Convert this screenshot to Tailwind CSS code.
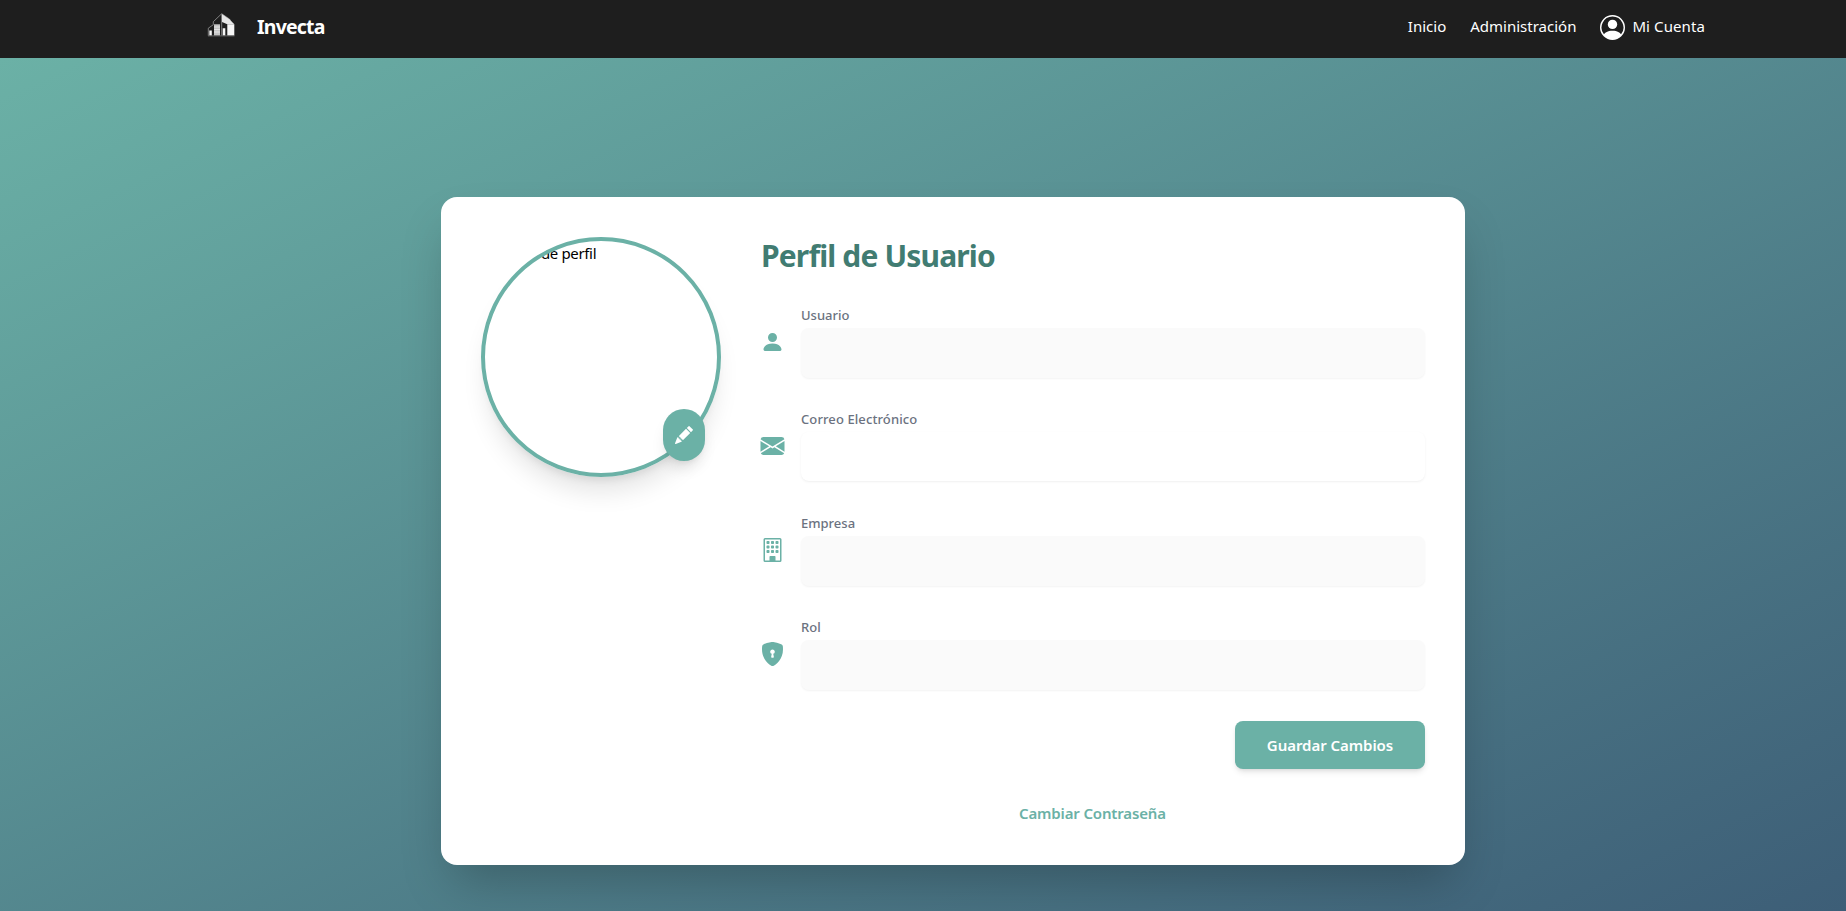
<!DOCTYPE html>
<html lang="es">
<head>
<meta charset="utf-8">
<title>Invecta</title>
<script src="https://cdn.jsdelivr.net/npm/@tailwindcss/browser@4"></script>
</head>
<body class="h-[911px] overflow-hidden flex flex-col font-['Noto_Sans',sans-serif] text-black">
<header class="h-[58px] shrink-0 bg-[#1e1e1e] text-white flex justify-between pl-[207px] pr-[141px] pb-1">
  <a class="flex items-center gap-[22px]">
    <svg class="w-7 h-7" viewBox="0 0 28 28" fill="none">
      <path d="M1.300 22.700v-7.500l5-3.500v-3L14.700.700l8 5.500v5M14.700 1v21.500" stroke="#8a8a8a" stroke-width=".9"/>
      <path d="M14.900 1l7.600 5.300 4.800 5H20.300L15 9z" fill="#e6e6e6"/>
      <path d="M7 11.300h6V22.500H7z" fill="#c4c4c4"/>
      <path d="M7 14h6M7 16.500h6M7 19h6" stroke="#eee" stroke-width=".8"/>
      <path d="M20.300 11.300h7v11.200h-7zM15.700 15.300h2.600v7.200h-2.600zM2.300 17.500h2.500v5H2.300z" fill="#f5f5f5"/>
      <path d="M1 22.900h26.500" stroke="#777" stroke-width=".8"/>
    </svg>
    <span class="text-[19.5px] tracking-[-0.8px] font-bold">Invecta</span>
  </a>
  <nav class="flex items-center gap-6 text-[15px]">
    <a class="pb-px">Inicio</a>
    <a class="pb-px">Administración</a>
    <a class="flex items-center gap-[7px]">
      <svg class="w-[25px] h-[25px]" viewBox="0 0 16 16" fill="currentColor"><path d="M11 6a3 3 0 1 1-6 0 3 3 0 0 1 6 0"/><path fill-rule="evenodd" d="M0 8a8 8 0 1 1 16 0A8 8 0 0 1 0 8m8-7a7 7 0 0 0-5.468 11.370C3.242 11.226 4.805 10 8 10s4.757 1.225 5.468 2.370A7 7 0 0 0 8 1"/></svg>
      <span class="pb-px tracking-[0.1px]">Mi Cuenta</span>
    </a>
  </nav>
</header>
<main class="flex-1 bg-linear-to-br/srgb from-[#6bb1a6] to-[#3d5e77] pl-[441px] pt-[139px]">
  <section class="w-[1024px] h-[668px] bg-white rounded-2xl shadow-2xl p-10 flex gap-[39px]">
    <div class="relative w-60 h-60 shrink-0">
      <div class="w-60 h-60 rounded-full border-4 border-[#6bb1a6] overflow-hidden shadow-xl text-[15px] tracking-[-0.35px] leading-6 whitespace-nowrap">Imagen de perfil</div>
      <button class="absolute right-4 bottom-4 w-[42px] h-[52px] rounded-[21px] bg-[#6bb1a6] text-white shadow-lg flex items-center justify-center">
        <svg class="w-[18px] h-[18px]" viewBox="0 0 16 16" fill="currentColor"><path d="M12.854.146a.5.5 0 0 0-.707 0L10.500 1.793 14.207 5.500l1.647-1.646a.5.5 0 0 0 0-.708zm.646 6.061L9.793 2.500 3.293 9H3.500a.5.5 0 0 1 .5.5v.5h.5a.5.5 0 0 1 .5.5v.5h.5a.5.5 0 0 1 .5.5v.5h.5a.5.5 0 0 1 .5.5v.207zm-7.468 7.468A.5.5 0 0 1 6 13.500V13h-.5a.5.5 0 0 1-.5-.5V12h-.5a.5.5 0 0 1-.5-.5V11h-.5a.5.5 0 0 1-.5-.5V10h-.5a.5.5 0 0 1-.175-.032l-.179.178a.5.5 0 0 0-.11.168l-2 5a.5.5 0 0 0 .65.65l5-2a.5.5 0 0 0 .168-.11z"/></svg>
      </button>
    </div>
    <div class="flex-1 flex flex-col">
      <h1 class="text-[30px] tracking-[-0.85px] leading-[38px] font-bold text-[#417c72] h-[68px] pl-px">Perfil de Usuario</h1>
      <div class="flex flex-col gap-8 text-[#6bb1a6]">
        <div class="flex gap-4 h-[72px]">
          <svg class="w-[25px] h-6 mt-[25px]" viewBox="0 0 16 16" fill="currentColor"><path d="M3 14s-1 0-1-1 1-4 6-4 6 3 6 4-1 1-1 1zm5-6a3 3 0 1 0 0-6 3 3 0 0 0 0 6"/></svg>
          <div class="flex-1"><label class="block h-[23px] text-[13px] leading-5 font-medium text-[#6b7280]">Usuario</label><div class="h-[50px] rounded-lg bg-[#fafafa] shadow-xs"></div></div>
        </div>
        <div class="flex gap-4 h-[72px]">
          <svg class="w-[25px] h-6 mt-[25px]" viewBox="0 0 16 16" fill="currentColor"><path d="M.05 3.555A2 2 0 0 1 2 2h12a2 2 0 0 1 1.950 1.555L8 8.414zM0 4.697v7.104l5.803-3.558zM6.761 8.830l-6.570 4.027A2 2 0 0 0 2 14h12a2 2 0 0 0 1.808-1.144l-6.570-4.027L8 9.586zm3.436-.586L16 11.801V4.697z"/></svg>
          <div class="flex-1"><label class="block h-[23px] text-[13px] tracking-[0.1px] leading-5 font-medium text-[#6b7280]">Correo Electrónico</label><div class="h-[49px] rounded-lg bg-white shadow-sm shadow-black/5"></div></div>
        </div>
        <div class="flex gap-4 h-[72px]">
          <svg class="w-[25px] h-6 mt-[25px]" viewBox="0 0 16 16" fill="currentColor"><path d="M4 2.500a.5.5 0 0 1 .5-.5h1a.5.5 0 0 1 .5.5v1a.5.5 0 0 1-.5.5h-1a.5.5 0 0 1-.5-.5zm3 0a.5.5 0 0 1 .5-.5h1a.5.5 0 0 1 .5.5v1a.5.5 0 0 1-.5.5h-1a.5.5 0 0 1-.5-.5zm3.500-.5a.5.5 0 0 0-.5.5v1a.5.5 0 0 0 .5.5h1a.5.5 0 0 0 .5-.5v-1a.5.5 0 0 0-.5-.5zM4 5.500a.5.5 0 0 1 .5-.5h1a.5.5 0 0 1 .5.5v1a.5.5 0 0 1-.5.5h-1a.5.5 0 0 1-.5-.5zM7.500 5a.5.5 0 0 0-.5.5v1a.5.5 0 0 0 .5.5h1a.5.5 0 0 0 .5-.5v-1a.5.5 0 0 0-.5-.5zm2.500.5a.5.5 0 0 1 .5-.5h1a.5.5 0 0 1 .5.5v1a.5.5 0 0 1-.5.5h-1a.5.5 0 0 1-.5-.5zM4.500 8a.5.5 0 0 0-.5.5v1a.5.5 0 0 0 .5.5h1a.5.5 0 0 0 .5-.5v-1a.5.5 0 0 0-.5-.5zm2.500.5a.5.5 0 0 1 .5-.5h1a.5.5 0 0 1 .5.5v1a.5.5 0 0 1-.5.5h-1a.5.5 0 0 1-.5-.5zm3.500-.5a.5.5 0 0 0-.5.5v1a.5.5 0 0 0 .5.5h1a.5.5 0 0 0 .5-.5v-1a.5.5 0 0 0-.5-.5z"/><path d="M2 1a1 1 0 0 1 1-1h10a1 1 0 0 1 1 1v14a1 1 0 0 1-1 1H3a1 1 0 0 1-1-1zm11 0H3v14h3v-2.500a.5.5 0 0 1 .5-.5h3a.5.5 0 0 1 .5.5V15h3z"/></svg>
          <div class="flex-1"><label class="block h-[23px] text-[13px] leading-5 font-medium text-[#6b7280]">Empresa</label><div class="h-[50px] rounded-lg bg-[#fafafa] shadow-xs"></div></div>
        </div>
        <div class="flex gap-4 h-[72px]">
          <svg class="w-[25px] h-6 mt-[25px]" viewBox="0 0 16 16" fill="currentColor"><path fill-rule="evenodd" d="M8 0c-.69 0-1.843.265-2.928.56-1.110.3-2.229.655-2.887.87a1.540 1.540 0 0 0-1.044 1.262c-.596 4.477.787 7.795 2.465 9.990a11.800 11.800 0 0 0 2.517 2.453c.386.273.744.482 1.048.625.28.132.581.24.829.24s.548-.108.829-.24a7 7 0 0 0 1.048-.625 11.800 11.800 0 0 0 2.517-2.453c1.678-2.195 3.061-5.513 2.465-9.990a1.540 1.540 0 0 0-1.044-1.263 63 63 0 0 0-2.887-.87C9.843.266 8.690 0 8 0m0 5a1.500 1.500 0 0 1 .5 2.915l.385 1.990a.5.5 0 0 1-.491.595h-.788a.5.5 0 0 1-.49-.595l.384-1.990A1.500 1.500 0 0 1 8 5"/></svg>
          <div class="flex-1"><label class="block h-[23px] text-[13px] leading-5 font-medium text-[#6b7280]">Rol</label><div class="h-[50px] rounded-lg bg-[#fafafa] shadow-xs"></div></div>
        </div>
      </div>
      <button class="mt-8 self-end w-[190px] h-12 rounded-lg bg-[#6bb1a6] text-white text-[15px] tracking-[-0.05px] font-semibold shadow-md">Guardar Cambios</button>
      <a class="mt-8 self-center text-[15px] tracking-[-0.15px] leading-6 font-semibold text-[#6bb1a6]">Cambiar Contraseña</a>
    </div>
  </section>
</main>
</body>
</html>
